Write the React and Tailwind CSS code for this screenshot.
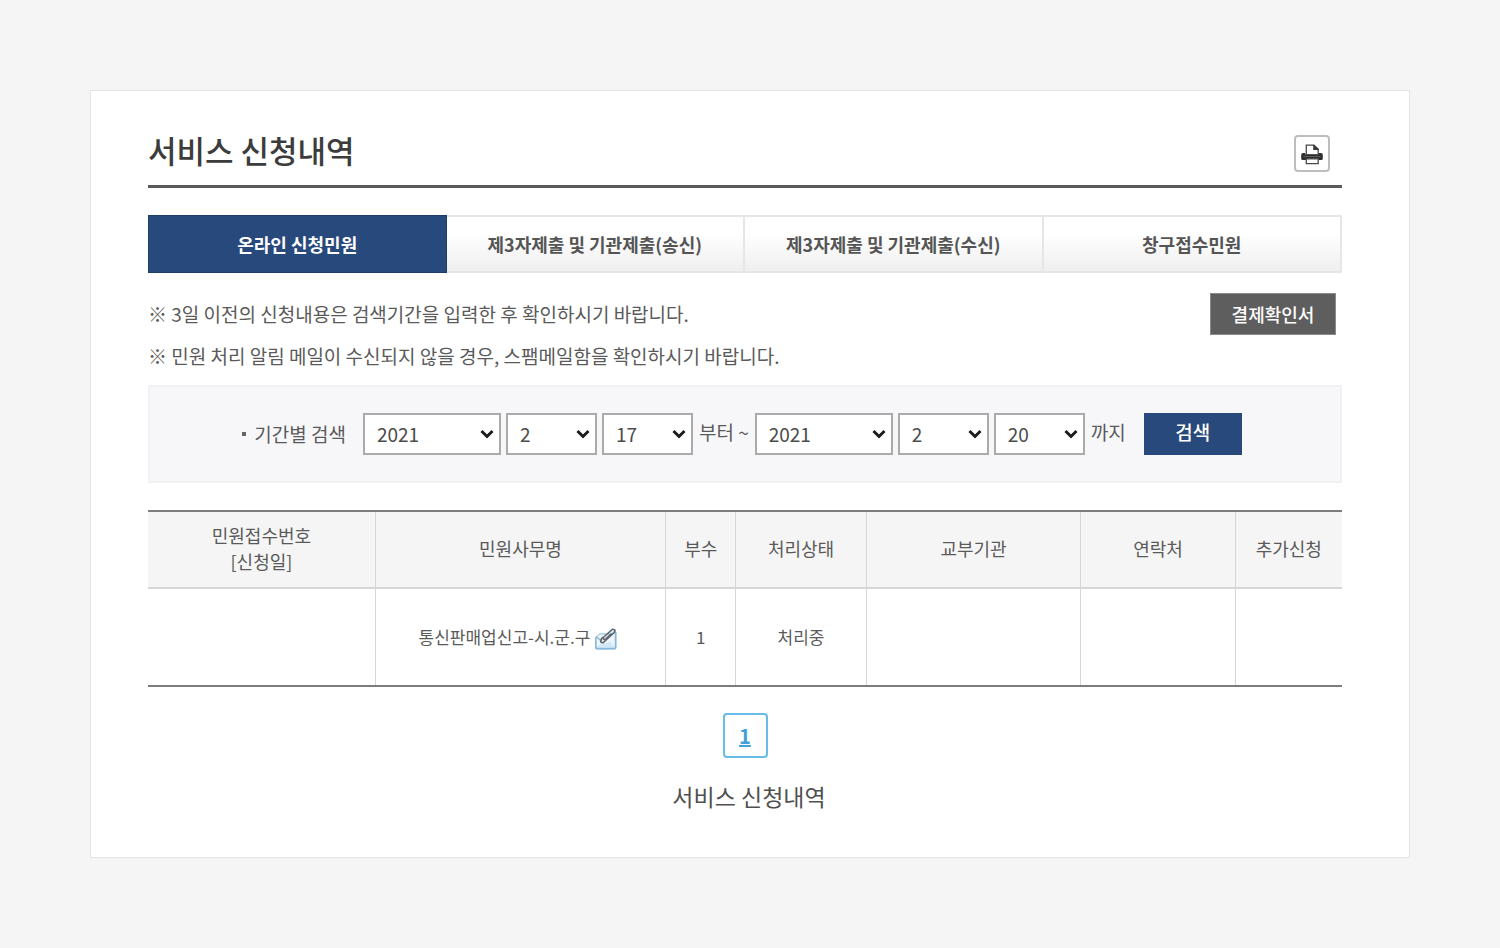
const TABS = [
  '온라인 신청민원',
  '제3자제출 및 기관제출(송신)',
  '제3자제출 및 기관제출(수신)',
  '창구접수민원',
];

const COLUMNS = [
  { label: '민원접수번호', sub: '[신청일]', width: 'w-[19%]' },
  { label: '민원사무명', width: 'w-[24.3%]' },
  { label: '부수', width: 'w-[5.9%]' },
  { label: '처리상태', width: 'w-[10.9%]' },
  { label: '교부기관', width: 'w-[18%]' },
  { label: '연락처', width: 'w-[12.9%]' },
  { label: '추가신청', width: 'w-[9%]' },
];

const CELL = 'border-l border-[#d6d6d6] first:border-l-0';

function PrinterIcon() {
  return (
    <svg viewBox="0 0 24 24" className="h-6 w-6 shrink-0" aria-hidden="true">
      <path d="M6.3 13V3.2h7.700l4.200 4V13z" fill="#fff" stroke="#4a4a4a" strokeWidth="1.300" />
      <path d="M13.200 2.600v5.400h5.600V7z" fill="#3a3a3a" />
      <path d="M1.200 13q0-2 2-2h2v1.500h13.600V11h2q2 0 2 2v3.500q0 1.500-1.500 1.500H2.700q-1.500 0-1.500-1.500z" fill="#2e2e2e" />
      <path d="M3.500 14.500h17" stroke="#5c5c5c" strokeWidth="1" />
      <path d="M6.300 16.800h11.900v4.900H6.300z" fill="#fff" stroke="#4a4a4a" strokeWidth="1.300" />
    </svg>
  );
}

function AttachmentIcon() {
  return (
    <svg viewBox="0 0 24 24" className="mt-1 h-6 w-6 shrink-0" aria-hidden="true">
      <path d="M1 10.500 5.500 6H17l5-4v19q0 1.500-1.500 1.500h-18Q1 22.500 1 21z" fill="#b9d7ed" />
      <path d="M2.500 10.500 6 8h12l2.500-2v13.500h-18z" fill="#eef6fc" />
      <path d="M2.500 20.500 9 15.500l3 1 4-2 5 6z" fill="#d3e7f6" />
      <path d="M1.800 10.500V20q0 1.800 1.800 1.800h16.200q2 0 2-2V5" fill="none" stroke="#8ab8da" strokeWidth="1.600" />
      <path d="m2 9.500 6 5" stroke="#8db4d0" strokeWidth="1.600" />
      <path d="M8.500 10.500 7 12.800q-1.200 3 1.800 3L20.300 5.500q1.700-3-1.600-3.300L9.800 10q-1.200 2.500 1.200 2.500l6-5.500" fill="none" stroke="#5f6870" strokeWidth="1.600" strokeLinecap="round" strokeLinejoin="round" />
    </svg>
  );
}

function DateSelect({ id, label, value, wide }) {
  return (
    <div className={wide ? 'relative w-[138px]' : 'relative w-[91px]'}>
      <select
        id={id}
        aria-label={label}
        defaultValue={value}
        className="h-[42px] w-full appearance-none border-2 border-[#ababab] bg-white pl-3 text-[19px] leading-6 text-[#4c4c4c]"
      >
        <option>{value}</option>
      </select>
      <svg viewBox="0 0 14 10" className="pointer-events-none absolute top-4 right-[7px] h-[10px] w-[14px]" aria-hidden="true">
        <path d="m1.500 2 5.500 5.500L12.500 2" fill="none" stroke="#1c1c1c" strokeWidth="3" />
      </svg>
    </div>
  );
}

export default function App() {
  return (
    <div className="min-h-screen bg-[#f5f5f5] p-[90px] font-['Noto_Sans_CJK_KR','Noto_Sans',sans-serif] text-[#5a5a5a]">
      <main className="border border-[#e4e4e4] bg-white pt-9 pr-[67px] pb-[43px] pl-[57px]">
        <header className="flex items-start justify-between border-b-[3px] border-[#5a5a5a] pr-3 pb-3">
          <h1 className="text-[31px] leading-[46px] font-medium text-[#3c3c3c]">서비스 신청내역</h1>
          <button type="button" aria-label="인쇄" className="mt-2 flex h-[37px] w-9 items-center justify-center rounded border-2 border-[#bdbdbd] bg-white">
            <PrinterIcon />
          </button>
        </header>

        <nav className="mt-[27px] grid h-[58px] grid-cols-4">
          {TABS.map((tab, i) => (
            <button
              key={tab}
              type="button"
              className={
                i === 0
                  ? 'border border-[#1f3d69] bg-[#28497c] text-[18px] font-bold text-white'
                  : 'border-y-2 border-r-2 border-[#e6e6e6] bg-linear-to-b from-white from-30% to-[#efefef] text-[18px] font-bold text-[#555]'
              }
            >
              {tab}
            </button>
          ))}
        </nav>

        <section className="mt-5 flex items-start justify-between pr-[6px]">
          <div className="text-[19px] leading-[42px]">
            <p>※ 3일 이전의 신청내용은 검색기간을 입력한 후 확인하시기 바랍니다.</p>
            <p>※ 민원 처리 알림 메일이 수신되지 않을 경우, 스팸메일함을 확인하시기 바랍니다.</p>
          </div>
          <button type="button" className="h-[42px] w-[126px] border border-[#8a8a8a] bg-[#5e5e5e] text-[18px] font-medium text-white">
            결제확인서
          </button>
        </section>

        <form className="mt-2 flex h-[98px] items-center justify-center gap-[5px] border-2 border-[#f1f1f3] bg-[#f7f7fa] pr-[6px] text-[19px]">
          <label htmlFor="from-year" className="mr-3 flex items-center gap-2">
            <span className="h-1 w-1 bg-[#666]" />
            기간별 검색
          </label>
          <DateSelect id="from-year" label="시작 연도" value="2021" wide />
          <DateSelect id="from-month" label="시작 월" value="2" />
          <DateSelect id="from-day" label="시작 일" value="17" />
          <span className="px-px pb-1">부터 ~</span>
          <DateSelect id="to-year" label="종료 연도" value="2021" wide />
          <DateSelect id="to-month" label="종료 월" value="2" />
          <DateSelect id="to-day" label="종료 일" value="20" />
          <span className="px-px pb-1">까지</span>
          <button type="button" className="ml-3 h-[42px] w-[98px] bg-[#28497c] pb-1 font-medium text-white">
            검색
          </button>
        </form>

        <table className="mt-[27px] w-full table-fixed border-separate border-spacing-0 border-y-2 border-[#7d7d7d] text-center text-[18px] leading-[26px]">
          <thead>
            <tr className="h-[77px] bg-[#f5f5f5]">
              {COLUMNS.map((col) => (
                <th key={col.label} scope="col" className={`${CELL} ${col.width} border-b-2 pb-[3px] font-normal`}>
                  {col.label}
                  {col.sub && <span className="block">{col.sub}</span>}
                </th>
              ))}
            </tr>
          </thead>
          <tbody>
            <tr className="h-[96px]">
              <td className={CELL} />
              <td className={CELL}>
                <span className="flex items-center justify-center gap-1 pr-1 text-[17px]">
                  통신판매업신고-시.군.구
                  <AttachmentIcon />
                </span>
              </td>
              <td className={`${CELL} text-[17px]`}>1</td>
              <td className={`${CELL} text-[17px]`}>처리중</td>
              <td className={CELL} />
              <td className={CELL} />
              <td className={CELL} />
            </tr>
          </tbody>
        </table>

        <nav aria-label="페이지" className="mt-[26px] flex justify-center">
          <a href="#1" aria-current="page" className="flex h-[45px] w-[45px] items-center justify-center rounded border-2 border-[#67bce9] pt-px text-[20px] font-bold text-[#429fd8] underline">
            1
          </a>
        </nav>
        <p className="mt-5 pl-2 text-center text-[23px] leading-9 text-[#505050]">서비스 신청내역</p>
      </main>
    </div>
  );
}
